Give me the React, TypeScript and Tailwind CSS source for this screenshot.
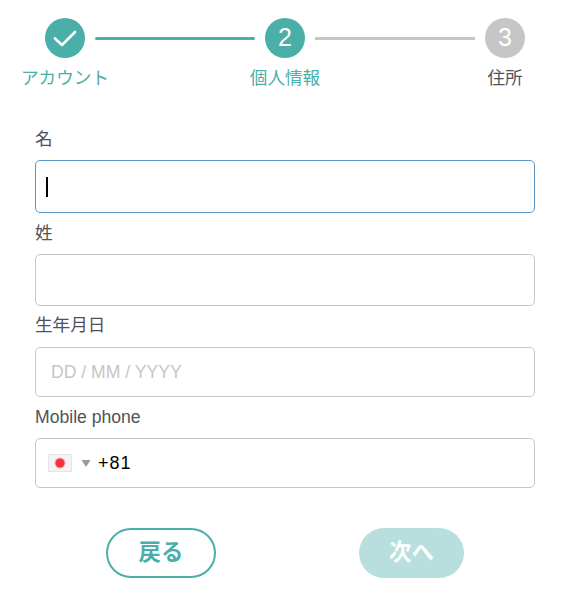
import React from "react";

const font = { fontFamily: '"Liberation Sans", "Noto Sans CJK JP", sans-serif' };

function Step({ label, color, bg, children }: { label: string; color: string; bg: string; children: React.ReactNode }) {
  return (
    <div className="flex w-[40px] flex-col items-center">
      <div className={`flex h-[40px] w-[40px] items-center justify-center rounded-full text-[25px] text-white ${bg}`}>{children}</div>
      <div className={`mt-[8px] whitespace-nowrap text-[17.6px] leading-[24px] ${color}`}>{label}</div>
    </div>
  );
}

function Field({ label, children }: { label: string; children: React.ReactNode }) {
  return (
    <div>
      <div className="text-[17.6px] leading-[24px] text-[#50525a]">{label}</div>
      {children}
    </div>
  );
}

export default function App() {
  return (
    <div style={font} className="h-[591px] w-[580px] overflow-hidden bg-white pt-[18px]">
      <div className="flex pl-[45px]">
        <Step label="アカウント" color="text-[#4aafa9]" bg="bg-[#4aafa9]">
          <svg width="24" height="24" viewBox="0 0 24 24" fill="none" stroke="white" strokeWidth="2.6" strokeLinecap="round" strokeLinejoin="round">
            <path d="M2 12.5 L9 19 L22 6" />
          </svg>
        </Step>
        <div className="mx-[10px] mt-[19px] h-[3px] w-[160px] rounded-full bg-[#4aafa9]" />
        <Step label="個人情報" color="text-[#4aafa9]" bg="bg-[#4aafa9]">2</Step>
        <div className="mx-[10px] mt-[19px] h-[3px] w-[160px] bg-[#c6c6c8]" />
        <Step label="住所" color="text-[#50525a]" bg="bg-[#c6c6c8]">3</Step>
      </div>

      <div className="mt-[37px] ml-[35px] w-[500px]">
        <Field label="名">
          <div className="mt-[9px] mb-[8px] flex h-[53px] items-center rounded-[5px] border border-[#5b97cc] pl-[10px]">
            <div className="h-[20px] w-[2px] bg-black" />
          </div>
        </Field>
        <Field label="姓">
          <div className="mt-[9px] mb-[7px] h-[52px] rounded-[5px] border border-[#c6c6c8]" />
        </Field>
        <Field label="生年月日">
          <div className="mt-[10px] mb-[8px] flex h-[50px] items-center rounded-[5px] border border-[#c6c6c8] pl-[15px] text-[17.6px] text-[#c6c6c8]">
            DD / MM / YYYY
          </div>
        </Field>
        <Field label="Mobile phone">
          <div className="mt-[9px] flex h-[50px] items-center rounded-[5px] border border-[#c6c6c8] pl-[12px]">
            <svg width="24" height="18" viewBox="0 0 24 18">
              <rect width="24" height="18" fill="#f4f4f4" />
              <rect x="0.5" y="0.5" width="23" height="17" fill="none" stroke="#e6e6e6" />
              <circle cx="12" cy="9" r="5.5" fill="#f5333f" opacity="0.35" />
              <circle cx="12" cy="9" r="4.5" fill="#f5333f" />
            </svg>
            <svg className="ml-[9px]" width="10" height="7" viewBox="0 0 10 7">
              <path d="M0.5 0 H9.5 L5 7 Z" fill="#999999" />
            </svg>
            <span className="ml-[7px] text-[18px] tracking-[1px] text-black">+81</span>
          </div>
        </Field>
      </div>

      <div className="mt-[40px] flex pl-[106px]">
        <div className="flex h-[50px] w-[110px] items-center justify-center rounded-full border-2 border-[#4aafa9] text-[22.4px] font-bold text-[#4aafa9]">戻る</div>
        <div className="ml-[143px] flex h-[50px] w-[105px] items-center justify-center rounded-full bg-[#b8dfdd] text-[22.4px] font-bold text-white">次へ</div>
      </div>
    </div>
  );
}
